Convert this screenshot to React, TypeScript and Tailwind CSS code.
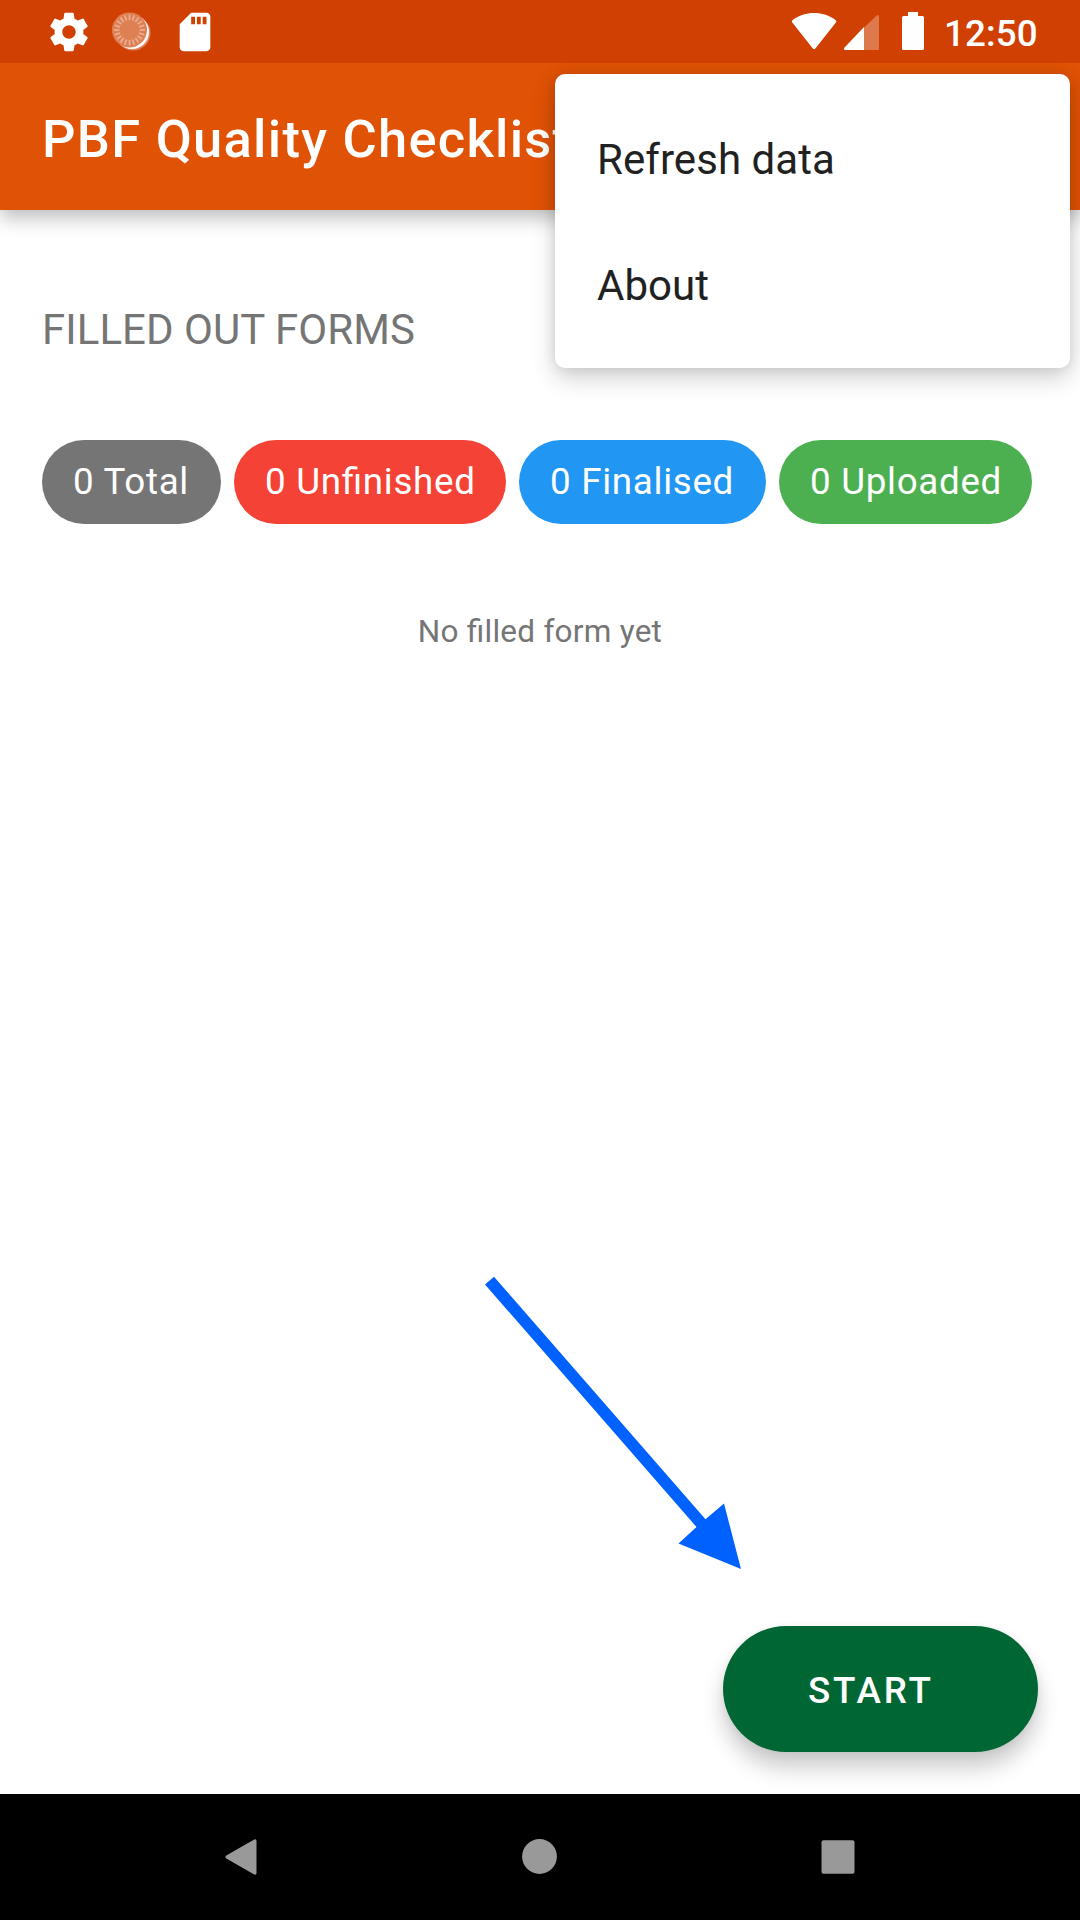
const chips = [
  { label: '0 Total', style: 'w-[179px] bg-[#757575]' },
  { label: '0 Unfinished', style: 'w-[272px] bg-[#f44336]' },
  { label: '0 Finalised', style: 'w-[247px] bg-[#2196f3]' },
  { label: '0 Uploaded', style: 'w-[253px] bg-[#4caf50]' },
];

const ticks = Array.from({ length: 20 }, (_, i) => i * 18);

function GearIcon() {
  return (
    <svg className="h-[46px] w-[46px]" viewBox="0 0 24 24" fill="#fff">
      <path d="M19.43 12.98c.04-.32.07-.64.07-.98s-.03-.66-.07-.98l2.11-1.65c.19-.15.24-.42.12-.64l-2-3.46c-.12-.22-.39-.3-.61-.22l-2.49 1c-.52-.4-1.08-.73-1.69-.98l-.38-2.65C14.46 2.18 14.25 2 14 2h-4c-.25 0-.46.18-.49.42l-.38 2.65c-.61.25-1.17.59-1.69.98l-2.49-1c-.23-.09-.49 0-.61.22l-2 3.46c-.13.22-.07.49.12.64l2.11 1.65c-.04.32-.07.65-.07.98s.03.66.07.98l-2.11 1.65c-.19.15-.24.42-.12.64l2 3.46c.12.22.39.3.61.22l2.49-1c.52.4 1.08.73 1.69.98l.38 2.65c.03.24.24.42.49.42h4c.25 0 .46-.18.49-.42l.38-2.65c.61-.25 1.17-.59 1.69-.98l2.49 1c.23.09.49 0 .61-.22l2-3.46c.12-.22.07-.49-.12-.64l-2.11-1.65zM12 15.5c-1.93 0-3.5-1.57-3.5-3.5s1.57-3.5 3.5-3.5 3.5 1.57 3.5 3.5-1.57 3.5-3.5 3.5z" />
    </svg>
  );
}

function SyncIcon() {
  return (
    <svg className="h-[46px] w-[46px]" viewBox="0 0 46 46">
      <circle cx="24" cy="24" r="17.5" fill="#fff" opacity=".35" />
      <circle cx="23" cy="23" r="17" fill="#fff" />
      <circle cx="20.5" cy="21" r="17.5" fill="#df8054" />
      {ticks.map((a) => (
        <line
          key={a}
          x1="20.5"
          y1="5.5"
          x2="20.5"
          y2="11"
          stroke="#eab197"
          strokeWidth="1.6"
          transform={`rotate(${a} 20.5 21)`}
        />
      ))}
    </svg>
  );
}

function SdIcon() {
  return (
    <svg className="h-[46px] w-[46px]" viewBox="0 0 24 24" fill="#fff">
      <path d="M18 2h-8L4.02 8 4 20c0 1.1.9 2 2 2h12c1.1 0 2-.9 2-2V4c0-1.1-.9-2-2-2zm-6 6h-2V4h2v4zm3 0h-2V4h2v4zm3 0h-2V4h2v4z" />
    </svg>
  );
}

function StatusIcons() {
  return (
    <svg className="h-[63px] w-[136px]" viewBox="790 0 136 63" fill="#fff">
      <path d="M792.3 22.5Q791 21 792.7 19.9C799 15.5 806 13 814.1 13S829.3 15.5 835.5 19.900Q837.2 21 835.900 22.500L815.600 48.200Q814.1 50 812.600 48.200Z" />
      <path d="M864 27V50H845.500Q843 50 844.600 47.400Z" />
      <path d="M864 27V50H877.500Q879 50 879 48.500V17Q879 14 876.500 15.700L864 27.500Z" opacity=".3" />
      <path d="M908 12H918V16H922.500Q924 16 924 17.500V48.500Q924 50 922.500 50H903.500Q902 50 902 48.500V17.500Q902 16 903.500 16H908Z" />
    </svg>
  );
}

export default function App() {
  return (
    <div className="relative flex h-[1920px] w-[1080px] flex-col overflow-hidden bg-white font-['Roboto',sans-serif] [font-feature-settings:'liga'_1]">
      <div className="z-10 flex h-[63px] shrink-0 items-center justify-between bg-[#d04002] pr-[42px] pl-[45.5px]">
        <div className="flex items-center gap-[17px]">
          <GearIcon />
          <SyncIcon />
          <SdIcon />
        </div>
        <div className="flex items-center gap-[18px]">
          <StatusIcons />
          <span className="relative top-[3px] w-[94px] text-[36.75px] leading-none font-medium tracking-[0.1px] text-white">12:50</span>
        </div>
      </div>

      <header className="flex h-[147px] shrink-0 items-center bg-[#e05206] px-[42px] pt-[5px] shadow-[0_8px_18px_rgba(0,0,0,0.26)]">
        <h1 className="text-[52.5px] leading-none font-medium tracking-[0.024em] whitespace-nowrap text-white">
          PBF Quality Checklist
        </h1>
      </header>

      <main className="flex flex-1 flex-col px-[42px] pt-[95px] pb-[42px]">
        <h2 className="text-[42px] leading-[50px] tracking-[0.05px] text-[#757575]">FILLED OUT FORMS</h2>
        <div className="mt-[85px] flex gap-[13px]">
          {chips.map((c) => (
            <div
              key={c.label}
              className={`flex h-[84px] items-center rounded-full pl-[31px] text-[36.75px] leading-none tracking-[0.019em] whitespace-nowrap text-white ${c.style}`}
            >
              {c.label}
            </div>
          ))}
        </div>
        <p className="mt-[88px] text-center text-[31.5px] leading-[40px] tracking-[0.25px] text-[#757575]">No filled form yet</p>
        <button className="mt-auto flex h-[126px] w-[315px] items-center self-end rounded-full bg-[#006633] pt-[5px] pl-[85px] text-[36.75px] leading-none font-medium tracking-[0.076em] text-white shadow-[0_16px_22px_rgba(0,0,0,0.2),0_2px_10px_rgba(0,0,0,0.06)]">
          START
        </button>
      </main>

      <nav className="z-10 h-[126px] shrink-0 bg-black">
        <svg className="h-[126px] w-[1080px]" viewBox="0 1794 1080 126" fill="#999">
          <path d="M226.3 1855.4L253.8 1839.7Q256.5 1838.3 256.5 1841.2V1872.8Q256.5 1875.7 253.8 1874.3L226.3 1858.6Q224.5 1857 226.3 1855.4Z" />
          <circle cx="539.5" cy="1856.5" r="17.4" />
          <rect x="821.5" y="1840.3" width="33" height="33.4" rx="2" />
        </svg>
      </nav>

      <svg className="absolute top-[1270px] left-[480px] h-[305px] w-[270px]" viewBox="480 1270 270 305" fill="#0061ff">
        <path d="M494 1276.7L485 1284.5L696.500 1527L678.500 1543.5L741 1569L724 1503.5L705.5 1519.2Z" />
      </svg>

      <div className="absolute top-[74px] left-[555px] z-20 flex h-[294px] w-[515px] flex-col rounded-[10px] bg-white py-[21px] text-[42px] tracking-[0.06px] text-[#212121] shadow-[0_10px_24px_rgba(0,0,0,0.18),0_0_14px_rgba(0,0,0,0.10)]">
        <div className="flex h-[126px] items-center px-[42px] pt-[3px]">Refresh data</div>
        <div className="flex h-[126px] items-center px-[42px] pt-[3px]">About</div>
      </div>
    </div>
  );
}
